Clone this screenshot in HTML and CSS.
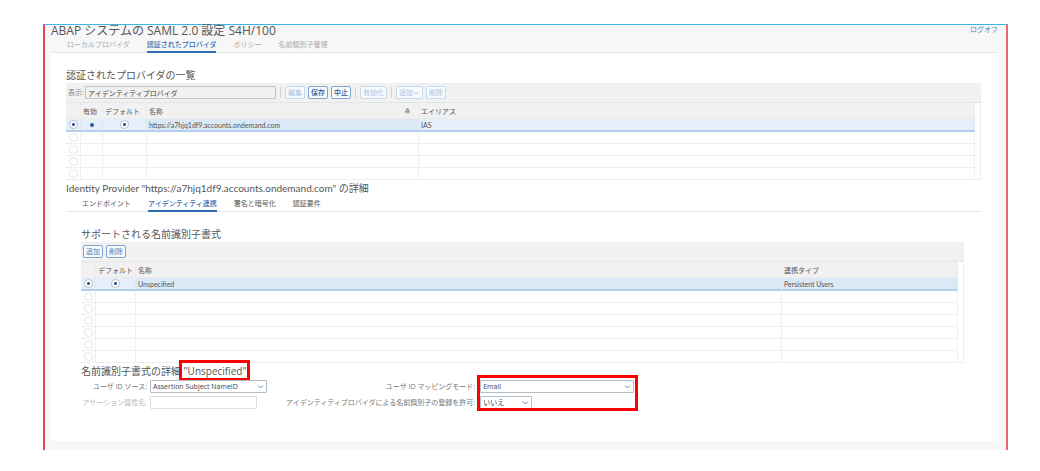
FILE: index.html
```html
<!DOCTYPE html>
<html lang="ja">
<head>
<meta charset="utf-8">
<title>ABAP システムの SAML 2.0 設定 S4H/100</title>
<link rel="stylesheet" href="styles.css">
</head>
<body>
<main class="frame">
  <header class="header">
    <h1 class="page-title">ABAP システムの SAML 2.0 設定 S4H/100</h1>
    <a class="logoff" href="#">ログオフ</a>
  </header>
  <nav class="tabs tabs-main">
    <a class="tab" href="#">ローカルプロバイダ</a>
    <a class="tab tab-active" href="#">認証されたプロバイダ</a>
    <a class="tab" href="#">ポリシー</a>
    <a class="tab" href="#">名前識別子管理</a>
  </nav>
  <div class="content">
    <h2 class="section-title">認証されたプロバイダの一覧</h2>
    <div class="toolbar">
      <label class="view-label" for="view">表示:</label>
      <input class="field view-field" id="view" value="アイデンティティプロバイダ" readonly>
      <span class="separator"></span>
      <button class="button" disabled>編集</button>
      <button class="button button-strong">保存</button>
      <button class="button button-strong">中止</button>
      <span class="separator"></span>
      <button class="button" disabled>有効化</button>
      <span class="separator"></span>
      <button class="button" disabled>追加<svg class="button-arrow" viewBox="0 0 7 7"><path d="M1 2.5 3.5 5 6 2.5"/></svg></button>
      <button class="button" disabled>削除</button>
    </div>
    <table class="grid">
      <colgroup><col class="col-select"><col class="col-active"><col class="col-default"><col class="col-name"><col><col class="col-gutter"></colgroup>
      <thead>
        <tr><th></th><th>有効</th><th>デフォルト</th><th><span class="sortable">名称<svg class="sort-icon" viewBox="0 0 7 7"><path d="M3.5 1 5.5 4.5h-4ZM1.2 5.8h4.6"/></svg></span></th><th>エイリアス</th><td class="gutter"></td></tr>
      </thead>
      <tbody>
        <tr class="selected"><td class="center"><input class="radio" type="radio" name="provider" aria-label="選択" checked></td><td class="center"><span class="dot"></span></td><td class="center"><input class="radio" type="radio" name="provider-default" aria-label="デフォルト" checked></td><td class="strong">https://a7hjq1df9.accounts.ondemand.com</td><td>IAS</td><td class="gutter"></td></tr>
        <tr><td class="center"><input class="radio" type="radio" aria-label="選択" disabled></td><td></td><td></td><td></td><td></td><td class="gutter"></td></tr>
        <tr><td class="center"><input class="radio" type="radio" aria-label="選択" disabled></td><td></td><td></td><td></td><td></td><td class="gutter"></td></tr>
        <tr><td class="center"><input class="radio" type="radio" aria-label="選択" disabled></td><td></td><td></td><td></td><td></td><td class="gutter"></td></tr>
        <tr><td class="center"><input class="radio" type="radio" aria-label="選択" disabled></td><td></td><td></td><td></td><td></td><td class="gutter"></td></tr>
      </tbody>
    </table>

    <h2 class="section-title">Identity Provider "https://a7hjq1df9.accounts.ondemand.com" の詳細</h2>
    <nav class="tabs tabs-detail">
      <a class="tab" href="#">エンドポイント</a>
      <a class="tab tab-active" href="#">アイデンティティ連携</a>
      <a class="tab" href="#">署名と暗号化</a>
      <a class="tab" href="#">認証要件</a>
    </nav>

    <section class="detail">
      <h3 class="section-title">サポートされる名前識別子書式</h3>
      <div class="toolbar">
        <button class="button button-medium">追加</button>
        <button class="button button-medium">削除</button>
      </div>
      <table class="grid">
        <colgroup><col class="col-select"><col class="col-format-default"><col><col class="col-type"><col class="col-gutter"></colgroup>
        <thead>
          <tr><th></th><th>デフォルト</th><th>名称</th><th>連携タイプ</th><td class="gutter"></td></tr>
        </thead>
        <tbody>
          <tr class="selected"><td class="center"><input class="radio" type="radio" name="format" aria-label="選択" checked></td><td class="center"><input class="radio" type="radio" name="format-default" aria-label="デフォルト" checked></td><td class="strong">Unspecified</td><td class="strong">Persistent Users</td><td class="gutter"></td></tr>
          <tr><td class="center"><input class="radio" type="radio" aria-label="選択" disabled></td><td></td><td></td><td></td><td class="gutter"></td></tr>
          <tr><td class="center"><input class="radio" type="radio" aria-label="選択" disabled></td><td></td><td></td><td></td><td class="gutter"></td></tr>
          <tr><td class="center"><input class="radio" type="radio" aria-label="選択" disabled></td><td></td><td></td><td></td><td class="gutter"></td></tr>
          <tr><td class="center"><input class="radio" type="radio" aria-label="選択" disabled></td><td></td><td></td><td></td><td class="gutter"></td></tr>
          <tr><td class="center"><input class="radio" type="radio" aria-label="選択" disabled></td><td></td><td></td><td></td><td class="gutter"></td></tr>
          <tr><td class="center"><input class="radio" type="radio" aria-label="選択" disabled></td><td></td><td></td><td></td><td class="gutter"></td></tr>
        </tbody>
      </table>

      <h3 class="section-title">名前識別子書式の詳細 <span class="marked marked-title">"Unspecified"</span></h3>
      <form class="form">
        <div class="labels">
          <label for="source">ユーザ ID ソース:</label>
          <label class="label-disabled" for="attribute">アサーション属性名:</label>
        </div>
        <div class="fields">
          <span class="select-box select-source"><select class="field" id="source"><option>Assertion Subject NameID</option></select><svg class="chevron" viewBox="0 0 7 7"><path d="M1 2.5 3.5 5 6 2.5"/></svg></span>
          <input class="field attribute-field" id="attribute" disabled>
        </div>
        <div class="labels labels-right">
          <label for="mode">ユーザ ID マッピングモード:</label>
          <label for="allow">アイデンティティプロバイダによる名前識別子の登録を許可:</label>
        </div>
        <div class="fields marked marked-fields">
          <span class="select-box select-mode"><select class="field" id="mode"><option>Email</option></select><svg class="chevron" viewBox="0 0 7 7"><path d="M1 2.5 3.5 5 6 2.5"/></svg></span>
          <span class="select-box select-allow"><select class="field" id="allow"><option>いいえ</option></select><svg class="chevron" viewBox="0 0 7 7"><path d="M1 2.5 3.5 5 6 2.5"/></svg></span>
        </div>
      </form>
    </section>
  </div>
</main>
</body>
</html>
```

FILE: styles.css
```css
* {
  box-sizing: border-box;
}

body {
  margin: 0;
  padding: 24px 32px 20px 43px;
  background: #fff;
  color: #555;
  font: 7px/10px "Open Sans", "Noto Sans CJK JP", sans-serif;
}

a {
  color: inherit;
  text-decoration: none;
}

input,
select,
button {
  margin: 0;
  font: inherit;
}

.frame {
  padding: 0 8px 9px 6px;
  background: #f7f7f7;
  border: solid #f0676c;
  border-width: 1px 2px 0;
  border-top-color: #3db5e6;
  border-left-color: #e0454e;
}

.header {
  display: flex;
  justify-content: space-between;
  height: 12px;
}

.page-title {
  margin: 0;
  color: #555;
  font-size: 12px;
  font-weight: 400;
  line-height: 12px;
}

.logoff {
  color: #4a86c8;
}

.tabs {
  display: flex;
  gap: 17px;
  height: 16px;
  padding-left: 16px;
  border-bottom: 1px solid #e6e6e6;
  line-height: 15px;
}

.tabs-main {
  color: #aaa;
}

.tab {
  height: 16px;
}

.tab-active {
  color: #2f6fb3;
  font-weight: 500;
  border-bottom: 2px solid #2f6fb3;
}

.content {
  padding: 14px 17px 32px 15px;
  background: #fff;
}

.section-title {
  margin: 0;
  color: #555;
  font-size: 10px;
  font-weight: 400;
  line-height: 16px;
}

h2.section-title,
.grid {
  font-family: Lato, "Noto Sans CJK JP", sans-serif;
}

.toolbar {
  display: flex;
  align-items: center;
  gap: 3px;
  height: 20px;
  padding: 0 2px;
  background: #f1f1f1;
  border-bottom: 1px solid #e6e6e6;
}

.view-label {
  width: 14px;
  white-space: nowrap;
  color: #888;
}

.field {
  width: 100%;
  height: 13px;
  padding: 0 2px;
  background: #fff;
  border: 1px solid #b4bcc4;
  border-radius: 1px;
  color: #444;
  line-height: 11px;
}

.view-field {
  width: 191px;
  background: #f1f1f1;
  border-color: #c4c4c4;
}

.separator {
  width: 1px;
  height: 11px;
  margin: 0 1px;
  background: #d4d4d4;
}

.button {
  display: flex;
  align-items: center;
  height: 13px;
  padding: 0 2px;
  background: #f8fafc;
  border: 1px solid #7ba6d2;
  border-radius: 2px;
  color: #2f6fb3;
  line-height: 11px;
}

.button:disabled {
  border-color: #c5d8ec;
  color: #a9c4df;
}

.button-strong {
  color: #1f5c9e;
  font-weight: 500;
}

.button-medium {
  color: #4a80b8;
}

.button-arrow,
.chevron,
.sort-icon {
  width: 7px;
  height: 7px;
  fill: none;
  stroke: currentColor;
}

.sort-icon {
  fill: #bbb;
  color: #999;
}

.grid {
  width: 100%;
  table-layout: fixed;
  border-collapse: separate;
  border-spacing: 0;
  white-space: nowrap;
}

.col-select { width: 15px; }
.col-active { width: 22px; }
.col-default { width: 44px; }
.col-name { width: 272px; }
.col-format-default { width: 40px; }
.col-type { width: 176px; }
.col-gutter { width: 6px; }

.grid th,
.grid td {
  height: 12px;
  padding: 0 2px;
  border-right: 1px solid #f0f0f0;
  border-bottom: 1px solid #eee;
  text-align: left;
  font-weight: 400;
}

.grid th {
  height: 16px;
  background: #f1f1f1;
  border-color: #ececec;
}

.grid .center {
  padding: 0;
  text-align: center;
}

.grid .gutter {
  padding: 0;
  background: #fff;
  border-bottom: 0;
}

.grid tbody tr:last-child .gutter {
  border-bottom: 1px solid #eee;
}

.grid .selected td {
  height: 13px;
  background: #e4effa;
  border-right-color: #dce8f4;
  border-bottom: 2px solid #b4cde8;
}

.grid .selected .strong {
  background: #dbe8f5;
}

.grid .selected .gutter {
  background: #fff;
  border-right-color: #eee;
  border-bottom: 0;
}

.sortable {
  display: flex;
  justify-content: space-between;
  align-items: center;
  padding-right: 5px;
}

.radio {
  display: block;
  width: 9px;
  height: 9px;
  margin: 0 auto;
  appearance: none;
  background: #fff;
  border: 1px solid #b8c0c8;
  border-radius: 50%;
}

.radio:checked {
  background: radial-gradient(circle, #1f5aa0 1px, #fff 2px);
}

.radio:disabled {
  border-color: #e6e6e6;
}

.dot {
  display: block;
  width: 4px;
  height: 4px;
  margin: 0 auto;
  background: #1f5aa0;
  border-radius: 50%;
}

.detail {
  padding: 14px 17px 0 15px;
}

.form {
  display: flex;
  gap: 3px;
  padding-top: 1px;
}

.labels,
.fields {
  display: flex;
  flex-direction: column;
  gap: 3px;
}

.labels {
  min-width: 66px;
  text-align: right;
  line-height: 13px;
  white-space: nowrap;
  color: #777;
}

.labels-right {
  margin: 0 2px 0 16px;
}

.label-disabled {
  color: #bbb;
}

.select-box {
  position: relative;
  height: 13px;
}

.select-box .field {
  display: block;
  appearance: none;
}

.select-source { width: 117px; }
.select-mode { width: 154px; }
.select-allow { width: 52px; }
.attribute-field { width: 107px; }

.attribute-field:disabled {
  border-color: #ddd;
}

.chevron {
  position: absolute;
  top: 3px;
  right: 3px;
  color: #5b8fc4;
  pointer-events: none;
}

/* Red call-out rectangles drawn over the form */
.marked {
  position: relative;
}

.marked::after {
  content: "";
  position: absolute;
  border: 3px solid #f00;
  pointer-events: none;
}

.marked-title::after {
  inset: -4px -4px -3px -5px;
}

.marked-fields::after {
  inset: -5px -4px -2px -3px;
}
```
